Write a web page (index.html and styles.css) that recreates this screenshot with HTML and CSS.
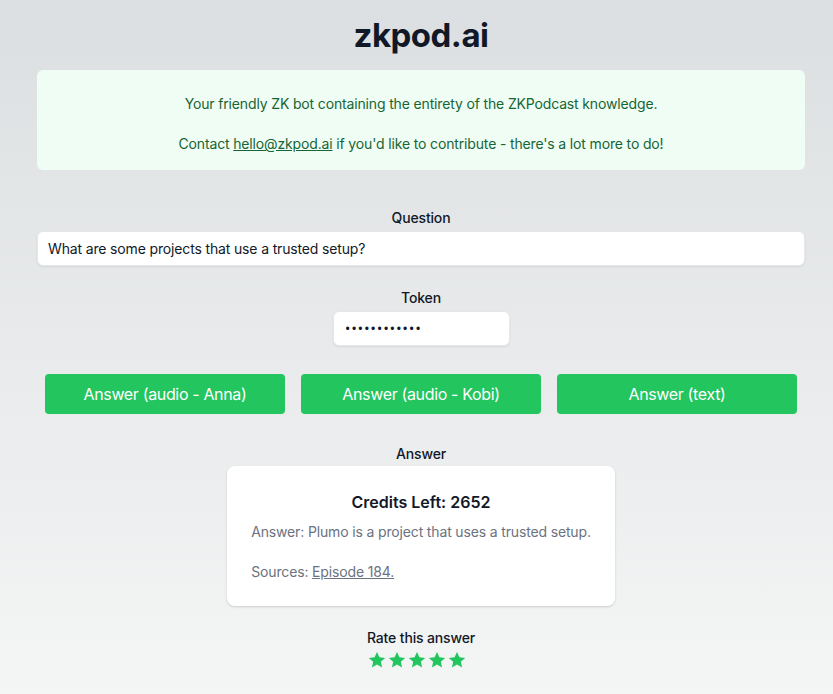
FILE: index.html
```html
<!DOCTYPE html>
<html lang="en">
<head>
    <meta charset="UTF-8">
    <meta name="viewport" content="width=device-width, initial-scale=1.0">
    <title>zkpod.ai</title>
    <link rel="stylesheet" href="styles.css">
</head>
<body>

<main class="page">
    <h1 class="title">zkpod.ai</h1>

    <!-- Intro -->
    <div class="intro">
        <p>Your friendly ZK bot containing the entirety of the ZKPodcast knowledge.</p>
        <p>Contact <a href="#">hello@zkpod.ai</a> if you'd like to contribute - there's a lot more to do!</p>
    </div>

    <!-- Question -->
    <div class="field field-question">
        <label for="question">Question</label>
        <input type="text" id="question" class="input-wide" value="What are some projects that use a trusted setup?">
    </div>

    <div class="field field-token">
        <label for="token">Token</label>
        <input type="password" id="token" class="input-small" value="abcdefghijkl">
    </div>

    <!-- Botones -->
    <div class="buttons">
        <button type="button" class="answer-btn">Answer (audio - Anna)</button>
        <button type="button" class="answer-btn">Answer (audio - Kobi)</button>
        <button type="button" class="answer-btn">Answer (text)</button>
    </div>

    <!-- Resultado -->
    <div class="field field-answer">
        <label>Answer</label>
        <div class="answer-card">
            <h2>Credits Left: 2652</h2>
            <p>Answer: Plumo is a project that uses a trusted setup.</p>
            <p class="sources">Sources: <a href="#">Episode 184.</a></p>
        </div>
    </div>

    <div class="rating">
        <span class="rating-label">Rate this answer</span>
        <div class="stars">
            <svg viewBox="0 0 24 24"><path d="M12 2.5l2.9 6.3 6.9.7-5.2 4.6 1.5 6.8L12 17.4l-6.1 3.5 1.5-6.8-5.2-4.6 6.9-.7z"/></svg>
            <svg viewBox="0 0 24 24"><path d="M12 2.5l2.9 6.3 6.9.7-5.2 4.6 1.5 6.8L12 17.4l-6.1 3.5 1.5-6.8-5.2-4.6 6.9-.7z"/></svg>
            <svg viewBox="0 0 24 24"><path d="M12 2.5l2.9 6.3 6.9.7-5.2 4.6 1.5 6.8L12 17.4l-6.1 3.5 1.5-6.8-5.2-4.6 6.9-.7z"/></svg>
            <svg viewBox="0 0 24 24"><path d="M12 2.5l2.9 6.3 6.9.7-5.2 4.6 1.5 6.8L12 17.4l-6.1 3.5 1.5-6.8-5.2-4.6 6.9-.7z"/></svg>
            <svg viewBox="0 0 24 24"><path d="M12 2.5l2.9 6.3 6.9.7-5.2 4.6 1.5 6.8L12 17.4l-6.1 3.5 1.5-6.8-5.2-4.6 6.9-.7z"/></svg>
        </div>
    </div>
</main>

</body>
</html>
```

FILE: styles.css
```css
html, body {
    margin: 0;
    min-height: 100%;
}
body {
    font-family: Inter, "Liberation Sans", sans-serif;
    color: #111827;
    letter-spacing: -0.15px;
    background: linear-gradient(to bottom, #dcdfe1, #f4f5f5);
    min-height: 694px;
}
.page {
    padding: 0 28px 0 37px;
    display: flex;
    flex-direction: column;
    align-items: center;
}
.title {
    font-size: 33px;
    font-weight: 700;
    line-height: 40px;
    letter-spacing: -0.5px;
    margin: 15px 0 15px;
}
.intro {
    align-self: stretch;
    background-color: #f0fdf4;
    color: #166534;
    border-radius: 6px;
    padding: 24px 16px 16px;
    text-align: center;
    font-size: 14px;
    line-height: 20px;
}
.intro p {
    margin: 0 0 20px;
}
.intro p:last-child {
    margin-bottom: 0;
}
.intro a {
    color: #166534;
}
.field {
    align-self: stretch;
    display: flex;
    flex-direction: column;
    align-items: center;
}
.field-question {
    margin-top: 38px;
}
.field-token {
    margin-top: 22px;
}
.field-answer {
    margin-top: 30px;
}
.field label {
    font-size: 14px;
    font-weight: 500;
    line-height: 20px;
    margin-bottom: 3px;
}
.field input {
    font-family: inherit;
    font-size: 14px;
    letter-spacing: inherit;
    color: #111827;
    background: #fff;
    border: 1px solid #e5e7eb;
    border-radius: 6px;
    box-shadow: 0 1px 2px rgba(0, 0, 0, 0.08);
    padding: 6px 10px;
    line-height: 21px;
    box-sizing: border-box;
    outline: none;
}
.input-wide {
    align-self: stretch;
    height: 35px;
}
.field .input-small {
    width: 177px;
    height: 35px;
    padding-left: 12px;
    font-family: "Liberation Sans", sans-serif;
    font-size: 12px;
    letter-spacing: 2.2px;
}
.buttons {
    display: flex;
    gap: 16px;
    margin-top: 28px;
}
.answer-btn {
    width: 240px;
    height: 40px;
    font-family: inherit;
    font-size: 16px;
    letter-spacing: -0.35px;
    color: white;
    background-color: #22c55e;
    border: none;
    border-radius: 4px;
    cursor: pointer;
}
.answer-btn:hover {
    background-color: #16a34a;
}
.field-answer label {
    margin-bottom: 2px;
}
.answer-card {
    background: #fff;
    border-radius: 8px;
    box-shadow: 0 1px 3px rgba(0, 0, 0, 0.1), 0 1px 2px rgba(0, 0, 0, 0.06);
    padding: 24px;
    text-align: left;
}
.answer-card h2 {
    font-size: 16px;
    font-weight: 600;
    line-height: 24px;
    letter-spacing: 0;
    margin: 0 0 8px;
    text-align: center;
}
.answer-card p {
    font-size: 14px;
    line-height: 20px;
    color: #6b7280;
    margin: 0;
}
.answer-card .sources {
    margin-top: 20px;
}
.answer-card a {
    color: #6b7280;
}
.rating {
    display: flex;
    flex-direction: column;
    align-items: center;
    margin-top: 22px;
}
.rating-label {
    font-size: 14px;
    font-weight: 500;
    line-height: 20px;
}
.stars {
    display: flex;
    margin-top: 2px;
    margin-right: 9px;
}
.stars svg {
    width: 20px;
    height: 20px;
    fill: #22c55e;
}
```
